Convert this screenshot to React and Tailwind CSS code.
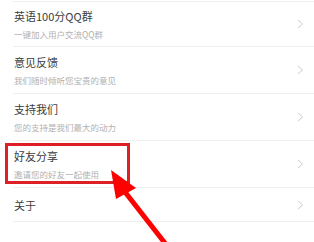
const items = [
  { title: '英语100分QQ群', sub: '一键加入用户交流QQ群' },
  { title: '意见反馈', sub: '我们随时倾听您宝贵的意见' },
  { title: '支持我们', sub: '您的支持是我们最大的动力' },
  { title: '好友分享', sub: '邀请您的好友一起使用' },
  { title: '关于' },
]

function Chevron() {
  return (
    <svg width="7" height="10" viewBox="0 0 7 10" className="shrink-0">
      <path d="M1 1 L5.5 5 L1 9" fill="none" stroke="#cccccc" strokeWidth="1" />
    </svg>
  )
}

export default function App() {
  return (
    <div
      className="relative w-[314px] h-[242px] bg-white overflow-hidden"
      style={{ fontFamily: '"Noto Sans CJK SC", "Noto Sans", sans-serif' }}
    >
      <div className="pt-px pl-[13px]">
        <div className="border-t border-[#f0f0f0]">
          {items.map((it, i) => (
            <div
              key={i}
              className={`flex items-center justify-between pl-px pr-[10px] border-b border-[#efefef] ${
                it.sub ? (i === 0 ? 'h-[45px]' : 'h-[47px]') : 'h-[34px]'
              }`}
            >
              <div className="flex flex-col">
                <span className="text-[11px] leading-[14px] text-[#3c3c3c]">{it.title}</span>
                {it.sub && (
                  <span className="mt-[5px] text-[8.5px] leading-[12px] text-[#b0b0b0]">{it.sub}</span>
                )}
              </div>
              <Chevron />
            </div>
          ))}
        </div>
      </div>

      <div className="absolute left-[5px] top-[143px] w-[125px] h-[41px] border-[3px] border-[#de1f26]" />

      <svg className="absolute left-0 top-0" width="314" height="242" viewBox="0 0 314 242">
        <polygon points="111,170 116,199 136,188" fill="#ff0000" />
        <line x1="125" y1="192" x2="168" y2="247" stroke="#ff0000" strokeWidth="5" />
      </svg>
    </div>
  )
}
